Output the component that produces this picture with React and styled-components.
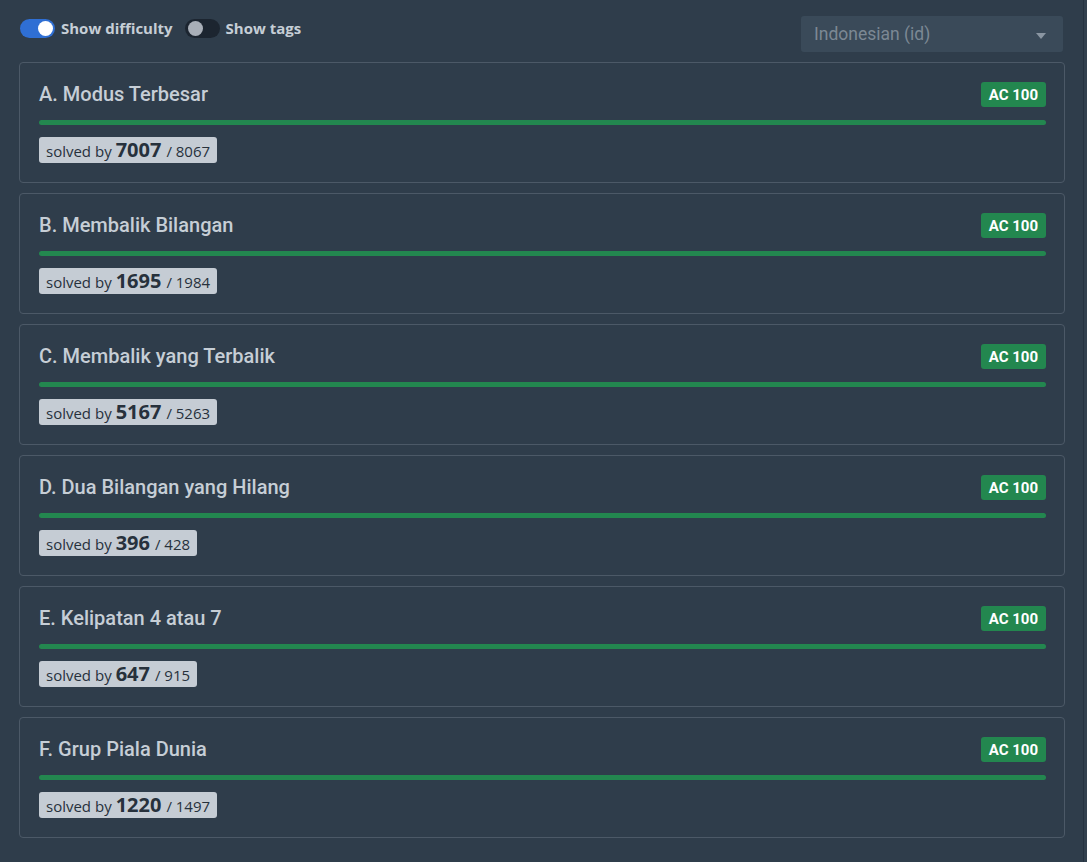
import React from "react";
import styled, { createGlobalStyle } from "styled-components";

const Global = createGlobalStyle`
  html, body { margin: 0; padding: 0; background: #2f3d4b; }
  body { font-family: Roboto, "Open Sans", sans-serif; }
`;

const Page = styled.div`
  display: flex;
  min-height: 862px;
`;

const Main = styled.div`
  flex: 1;
  padding: 16px 18px 24px 19px;
  display: flex;
  flex-direction: column;
  gap: 10px;
  border-right: 1px solid #263240;
`;

const Edge = styled.div`
  width: 3px;
  background: #32404e;
`;

const Toolbar = styled.div`
  display: flex;
  align-items: flex-start;
  justify-content: space-between;
  padding-left: 1px;
`;

const Toggles = styled.div`
  display: flex;
  align-items: center;
  gap: 12px;
  padding-top: 2px;
`;

const ToggleLabel = styled.label`
  display: flex;
  align-items: center;
  gap: 6px;
  font-family: "Open Sans", sans-serif;
  font-weight: 700;
  font-size: 15px;
  line-height: 20px;
  color: #c6ced6;
`;

const Track = styled.span`
  position: relative;
  width: 35px;
  height: 19px;
  border-radius: 10px;
  background: ${(p) => (p.$on ? "#2f6fd4" : "#1c2530")};
  display: inline-block;
`;

const Knob = styled.span`
  position: absolute;
  top: 2px;
  left: ${(p) => (p.$on ? "18px" : "3px")};
  width: 15px;
  height: 15px;
  border-radius: 50%;
  background: ${(p) => (p.$on ? "#ffffff" : "#a9afb8")};
`;

const Select = styled.div`
  width: 262px;
  height: 36px;
  margin-right: 2px;
  box-sizing: border-box;
  background: #3a4a59;
  border-radius: 3px;
  display: flex;
  align-items: center;
  justify-content: space-between;
  padding: 0 17px 0 13px;
  font-family: Roboto, sans-serif;
  font-size: 17.5px;
  color: #7c8894;
`;

const Caret = styled.span`
  width: 0;
  height: 0;
  border-left: 5px solid transparent;
  border-right: 5px solid transparent;
  border-top: 6px solid #8a96a2;
  margin-top: 4px;
`;

const Card = styled.div`
  border: 1px solid #4c5967;
  border-radius: 4px;
  padding: 19px 18px 19px 19px;
  display: flex;
  flex-direction: column;
`;

const Header = styled.div`
  display: flex;
  align-items: flex-start;
  justify-content: space-between;
`;

const Title = styled.div`
  font-family: Roboto, sans-serif;
  font-weight: 500;
  font-size: 20px;
  line-height: 24px;
  color: #c6ced6;
`;

const Badge = styled.span`
  background: #23874f;
  color: #fff;
  font-family: Roboto, sans-serif;
  font-weight: 700;
  font-size: 15px;
  padding: 0 8px;
  height: 25px;
  display: flex;
  align-items: center;
  border-radius: 3px;
`;

const Bar = styled.div`
  height: 5px;
  border-radius: 3px;
  background: #23874f;
  margin-top: 13px;
`;

const Solved = styled.div`
  align-self: flex-start;
  margin-top: 12px;
  background: #c5ccd4;
  color: #27313c;
  border-radius: 3px;
  height: 26px;
  box-sizing: border-box;
  padding: 0 7px;
  display: flex;
  align-items: baseline;
  font-family: "Open Sans", sans-serif;
  font-size: 15px;
  line-height: 26px;
`;

const Count = styled.b`
  font-size: 20px;
  font-weight: 700;
  margin: 0 5px 0 4px;
`;

const Total = styled.span`
  font-size: 15px;
`;

const problems = [
  ["A. Modus Terbesar", 7007, 8067],
  ["B. Membalik Bilangan", 1695, 1984],
  ["C. Membalik yang Terbalik", 5167, 5263],
  ["D. Dua Bilangan yang Hilang", 396, 428],
  ["E. Kelipatan 4 atau 7", 647, 915],
  ["F. Grup Piala Dunia", 1220, 1497],
];

export default function App() {
  return (
    <>
      <Global />
      <Page>
        <Main>
          <Toolbar>
            <Toggles>
              <ToggleLabel>
                <Track $on>
                  <Knob $on />
                </Track>
                Show difficulty
              </ToggleLabel>
              <ToggleLabel>
                <Track>
                  <Knob />
                </Track>
                Show tags
              </ToggleLabel>
            </Toggles>
            <Select>
              Indonesian (id)
              <Caret />
            </Select>
          </Toolbar>
          {problems.map(([t, s, n]) => (
            <Card key={t}>
              <Header>
                <Title>{t}</Title>
                <Badge>AC 100</Badge>
              </Header>
              <Bar />
              <Solved>
                solved by<Count>{s}</Count>
                <Total>/ {n}</Total>
              </Solved>
            </Card>
          ))}
        </Main>
        <Edge />
      </Page>
    </>
  );
}
